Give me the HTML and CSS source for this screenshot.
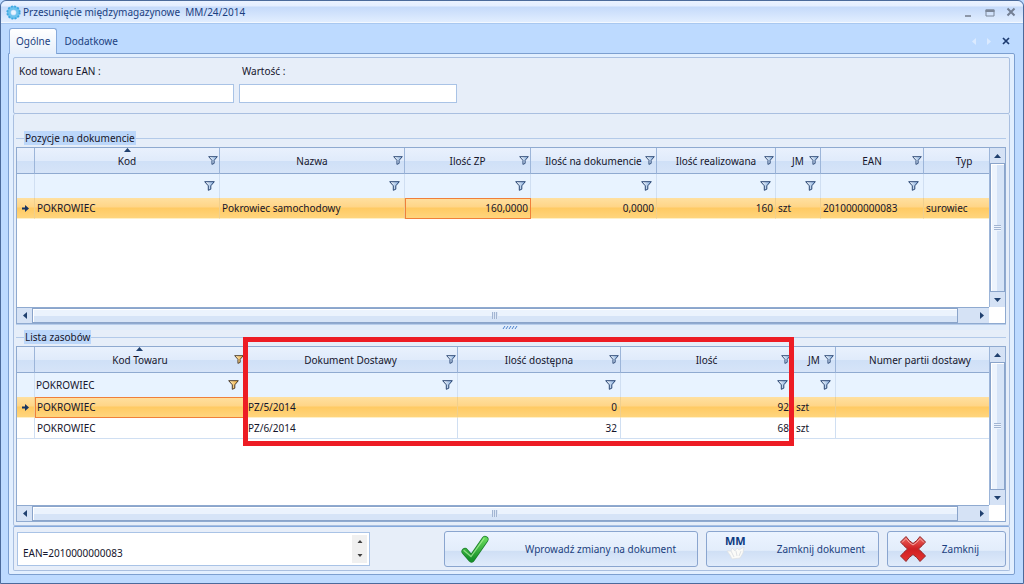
FILE: index.html
```html
<!DOCTYPE html>
<html lang="pl">
<head>
<meta charset="utf-8">
<title>Przesunięcie międzymagazynowe MM/24/2014</title>
<link rel="stylesheet" href="styles.css">
</head>
<body>
<svg class="defs" aria-hidden="true">
  <defs>
    <linearGradient id="gblue" x1="0" x2="1"><stop offset="0" stop-color="#fff"/><stop offset="1" stop-color="#7fa9dc"/></linearGradient>
    <linearGradient id="ggold" x1="0" x2="1"><stop offset="0" stop-color="#fff3cf"/><stop offset="1" stop-color="#f0a62c"/></linearGradient>
    <linearGradient id="ggreen" x1="0" y1="0" x2="0" y2="1"><stop offset="0" stop-color="#63d659"/><stop offset="1" stop-color="#16912a"/></linearGradient>
    <linearGradient id="gred" x1="0" y1="0" x2="0" y2="1"><stop offset="0" stop-color="#ee6a63"/><stop offset="0.5" stop-color="#cf1f22"/><stop offset="1" stop-color="#e5322f"/></linearGradient>
  </defs>
  <symbol id="funnel" viewBox="0 0 11 10"><path d="M.7.7h9.6L6.800 4.800v3.400L4.300 9.300V4.800z" fill="url(#gblue)" stroke="#2a4673"/></symbol>
  <symbol id="funnel-on" viewBox="0 0 11 10"><path d="M.7.7h9.6L6.800 4.800v3.400L4.300 9.300V4.800z" fill="url(#ggold)" stroke="#4a3a28"/></symbol>
  <symbol id="up" viewBox="0 0 7 4"><path d="M0 4 3.500 0 7 4z"/></symbol>
  <symbol id="down" viewBox="0 0 7 4"><path d="M0 0h7L3.500 4z"/></symbol>
  <symbol id="left" viewBox="0 0 4 7"><path d="M4 0v7L0 3.500z"/></symbol>
  <symbol id="right" viewBox="0 0 4 7"><path d="M0 0v7l4-3.500z"/></symbol>
  <symbol id="current" viewBox="0 0 7 7"><path d="M0 2.500h3V0l4 3.500L3 7V4.500H0z"/></symbol>
</svg>

<div class="window">
  <header class="titlebar">
    <svg class="app-icon" viewBox="0 0 16 16"><circle cx="8" cy="8" r="5" fill="none" stroke="#6cc3ee" stroke-width="4"/><circle cx="8" cy="8" r="6.6" fill="none" stroke="#3da6e0" stroke-width="2" stroke-dasharray="2 1.45"/><circle cx="8" cy="8" r="2.2" fill="#e6f5ff"/></svg>
    <h1 class="title">Przesunięcie międzymagazynowe&nbsp; MM/24/2014</h1>
    <div class="window-buttons">
      <button class="glyph" aria-label="Minimalizuj"><svg width="10" height="10"><path d="M1 8h6v2H1z" fill="#8d97a8"/></svg></button>
      <button class="glyph" aria-label="Maksymalizuj"><svg width="10" height="10"><path d="M1 3h8v6H1z" fill="none" stroke="#7b8698"/><path d="M.5 2.5h9V5h-9z" fill="#7b8698"/></svg></button>
      <button class="glyph" aria-label="Zamknij okno"><svg width="10" height="10"><path d="m1.500 1.500 7 7m0-7-7 7" stroke="#737f93" stroke-width="2"/></svg></button>
    </div>
  </header>

  <nav class="tabs" role="tablist">
    <button class="tab active" role="tab" aria-selected="true">Ogólne</button>
    <button class="tab" role="tab" aria-selected="false">Dodatkowe</button>
    <div class="tab-tools">
      <button class="glyph pale" aria-label="Poprzednia"><svg width="4" height="7"><use href="#left"/></svg></button>
      <button class="glyph pale" aria-label="Następna"><svg width="4" height="7"><use href="#right"/></svg></button>
      <button class="glyph" aria-label="Zamknij kartę"><svg width="8" height="8"><path d="m1 1 6 6m0-6L1 7" stroke="#1c3a70" stroke-width="1.7"/></svg></button>
    </div>
  </nav>

  <main class="content">
    <section class="panel fields">
      <div class="field"><label for="ean">Kod towaru EAN :</label><input id="ean" type="text"></div>
      <div class="field"><label for="value">Wartość :</label><input id="value" type="text"></div>
    </section>

    <section class="panel lists">
      <fieldset class="group first">
        <legend><span>Pozycje na dokumencie</span></legend>
        <div class="grid">
          <div class="view">
            <table class="items">
              <colgroup><col class="c-mark"><col class="c-kod"><col class="c-nazwa"><col class="c-zp"><col class="c-dok"><col class="c-real"><col class="c-jm"><col class="c-ean"><col></colgroup>
              <thead>
                <tr class="heads">
                  <th></th>
                  <th><div class="head"><svg class="sort" width="7" height="4"><use href="#up"/></svg><span>Kod</span><svg class="fun"><use href="#funnel"/></svg></div></th>
                  <th><div class="head"><span>Nazwa</span><svg class="fun"><use href="#funnel"/></svg></div></th>
                  <th><div class="head"><span>Ilość ZP</span><svg class="fun"><use href="#funnel"/></svg></div></th>
                  <th><div class="head"><span>Ilość na dokumencie</span><svg class="fun"><use href="#funnel"/></svg></div></th>
                  <th><div class="head"><span>Ilość realizowana</span><svg class="fun"><use href="#funnel"/></svg></div></th>
                  <th><div class="head"><span>JM</span><svg class="fun"><use href="#funnel"/></svg></div></th>
                  <th><div class="head"><span>EAN</span><svg class="fun"><use href="#funnel"/></svg></div></th>
                  <th><div class="head"><span>Typ</span><svg class="fun"></svg></div></th>
                </tr>
                <tr class="filters">
                  <td></td>
                  <td><svg class="fun big"><use href="#funnel"/></svg></td>
                  <td><svg class="fun big"><use href="#funnel"/></svg></td>
                  <td><svg class="fun big"><use href="#funnel"/></svg></td>
                  <td><svg class="fun big"><use href="#funnel"/></svg></td>
                  <td><svg class="fun big"><use href="#funnel"/></svg></td>
                  <td><svg class="fun big"><use href="#funnel"/></svg></td>
                  <td><svg class="fun big"><use href="#funnel"/></svg></td>
                  <td></td>
                </tr>
              </thead>
              <tbody>
                <tr class="selected"><td class="mark"><svg width="7" height="7"><use href="#current"/></svg></td><td>POKROWIEC</td><td>Pokrowiec samochodowy</td><td class="num focus">160,0000</td><td class="num">0,0000</td><td class="num">160</td><td>szt</td><td>2010000000083</td><td>surowiec</td></tr>
              </tbody>
            </table>
          </div>
          <div class="vbar">
            <button class="arrow" aria-label="W górę"><svg width="7" height="4"><use href="#up"/></svg></button>
            <div class="thumb"><i class="grip"></i></div>
            <button class="arrow" aria-label="W dół"><svg width="7" height="4"><use href="#down"/></svg></button>
          </div>
          <div class="hbar">
            <button class="arrow" aria-label="W lewo"><svg width="4" height="7"><use href="#left"/></svg></button>
            <div class="thumb"><i class="grip"></i></div>
            <button class="arrow" aria-label="W prawo"><svg width="4" height="7"><use href="#right"/></svg></button>
          </div>
          <div class="corner"></div>
        </div>
      </fieldset>

      <div class="splitter"><svg width="18" height="3"><path d="m1 3 2-3m1 3 2-3m1 3 2-3m1 3 2-3m1 3 2-3" stroke="#4a80cc"/></svg></div>

      <fieldset class="group second">
        <legend><span>Lista zasobów</span></legend>
        <div class="grid">
          <div class="view">
            <table class="stock">
              <colgroup><col class="c-mark"><col class="s-kod"><col class="s-dok"><col class="s-dost"><col class="s-ilosc"><col class="s-jm"><col></colgroup>
              <thead>
                <tr class="heads">
                  <th></th>
                  <th><div class="head"><svg class="sort" width="7" height="4"><use href="#up"/></svg><span>Kod Towaru</span><svg class="fun edge"><use href="#funnel-on"/></svg></div></th>
                  <th><div class="head"><span>Dokument Dostawy</span><svg class="fun"><use href="#funnel"/></svg></div></th>
                  <th><div class="head"><span>Ilość dostępna</span><svg class="fun"><use href="#funnel"/></svg></div></th>
                  <th><div class="head"><span>Ilość</span><svg class="fun"><use href="#funnel"/></svg></div></th>
                  <th><div class="head"><span>JM</span><svg class="fun"><use href="#funnel"/></svg></div></th>
                  <th><div class="head"><span>Numer partii dostawy</span><svg class="fun"></svg></div></th>
                </tr>
                <tr class="filters">
                  <td></td>
                  <td><div class="filled"><span>POKROWIEC</span><svg class="fun big"><use href="#funnel-on"/></svg></div></td>
                  <td><svg class="fun big"><use href="#funnel"/></svg></td>
                  <td><svg class="fun big"><use href="#funnel"/></svg></td>
                  <td><svg class="fun big"><use href="#funnel"/></svg></td>
                  <td><svg class="fun big"><use href="#funnel"/></svg></td>
                  <td></td>
                </tr>
              </thead>
              <tbody>
                <tr class="selected"><td class="mark"><svg width="7" height="7"><use href="#current"/></svg></td><td class="focus">POKROWIEC</td><td class="doc">PZ/5/2014</td><td class="num">0</td><td class="num">92</td><td class="unit">szt</td><td></td></tr>
                <tr><td class="mark"></td><td>POKROWIEC</td><td class="doc">PZ/6/2014</td><td class="num">32</td><td class="num">68</td><td class="unit">szt</td><td></td></tr>
              </tbody>
            </table>
          </div>
          <div class="vbar">
            <button class="arrow" aria-label="W górę"><svg width="7" height="4"><use href="#up"/></svg></button>
            <div class="thumb"><i class="grip"></i></div>
            <button class="arrow" aria-label="W dół"><svg width="7" height="4"><use href="#down"/></svg></button>
          </div>
          <div class="hbar">
            <button class="arrow" aria-label="W lewo"><svg width="4" height="7"><use href="#left"/></svg></button>
            <div class="thumb"><i class="grip"></i></div>
            <button class="arrow" aria-label="W prawo"><svg width="4" height="7"><use href="#right"/></svg></button>
          </div>
          <div class="corner"></div>
          <div class="highlight"></div>
        </div>
      </fieldset>
    </section>

    <footer class="panel actions">
      <div class="memo">
        <textarea aria-label="Informacje" rows="2" readonly>EAN=2010000000083</textarea>
        <div class="spin">
          <button class="glyph" aria-label="Przewiń w górę"><svg width="6" height="3" viewBox="0 0 7 4"><use href="#up"/></svg></button>
          <button class="glyph" aria-label="Przewiń w dół"><svg width="6" height="3" viewBox="0 0 7 4"><use href="#down"/></svg></button>
        </div>
      </div>
      <button class="action apply">
        <svg width="30" height="30" viewBox="0 0 30 30"><path d="M5 17.500 11.500 25 25 5.500" fill="none" stroke="#1a7d2a" stroke-width="7" stroke-linecap="round" stroke-linejoin="round"/><path d="M5 17.500 11.500 25 25 5.500" fill="none" stroke="url(#ggreen)" stroke-width="5.500" stroke-linecap="round" stroke-linejoin="round"/><path d="M4 16.500 11 22.500 24 4.500" fill="none" stroke="#b5f2a5" stroke-width="1.200" stroke-linecap="round" opacity=".7"/></svg>
        <span>Wprowadź zmiany na dokument</span>
      </button>
      <button class="action doc-close">
        <svg width="24" height="34" viewBox="0 0 24 34"><path d="m3 19 4 0 1-3 3 3 2-3 2 2 5-3-1 6-3 5-8 1-2-4z" fill="#fbfbf8" stroke="#dcdfe3" stroke-width=".7"/><path d="m7 19 3 6m2-6 1 5m4-5-2 5" stroke="#d2d6dc" stroke-width=".7"/><text x="1" y="13" class="mm">MM</text></svg>
        <span>Zamknij dokument</span>
      </button>
      <button class="action close">
        <svg width="28" height="28" viewBox="0 0 28 28"><path d="M1.500 7 7 1.500Q10 6 14 8.500 18 6 21 1.500L26.500 7Q23 11 19.500 14 23 17 26.500 21L21 26.500Q18 22 14 19.500 10 22 7 26.500L1.500 21Q5 17 8.500 14 5 11 1.500 7z" fill="url(#gred)" stroke="#93282a" stroke-linejoin="round"/><path d="M3 7.500 7 3.500Q10 8 14 10 18 8 21 3.500l4 4" fill="none" stroke="#f7aaa5"/></svg>
        <span>Zamknij</span>
      </button>
    </footer>
  </main>
</div>
</body>
</html>
```

FILE: styles.css
```css
* { box-sizing: border-box; }

body {
  margin: 0;
  background: #bddaff;
  color: #15152b;
  font: 10px/14px "Noto Sans", "Open Sans", sans-serif;
}

button, input, textarea { font: inherit; color: inherit; }
button { padding: 0; border: 0; background: none; }
svg { display: block; flex: none; }
.defs { position: absolute; width: 0; height: 0; }

.window {
  display: flex;
  flex-direction: column;
  min-height: 100vh;
  padding: 0 8px 8px 7px;
  border: 1px solid #4b6a9b;
  border-radius: 6px 6px 0 0;
  background: #bddaff;
}

.titlebar {
  display: flex;
  align-items: center;
  height: 23px;
  margin: 0 -8px 0 -7px;
  padding: 0 7px 0 5px;
  border-bottom: 1px solid #a9c8f0;
  border-radius: 6px 6px 0 0;
  background: linear-gradient(#eaf2ff 0, #e4eeff 5px, #c5dafa 6px, #e3efff 22px);
  box-shadow: inset 0 -1px #f3f8ff;
}
.app-icon { width: 15px; height: 15px; margin-right: 2px; }
.title { margin: 0; color: #1b3f80; font-size: 10px; font-weight: 400; }
.window-buttons { display: flex; gap: 11px; margin-left: auto; }
.glyph { display: flex; align-items: center; justify-content: center; }

.tabs { display: flex; align-items: flex-end; height: 29px; padding-left: 1px; }
.tab { height: 25px; padding: 0 6px 1px; border: 1px solid transparent; border-bottom: 0; color: #1b3f80; }
.tab.active {
  position: relative;
  height: 26px;
  margin-bottom: -1px;
  padding-bottom: 2px;
  border-color: #87aadb;
  border-radius: 3px 3px 0 0;
  background: linear-gradient(#fff, #e6effb);
}
.tab-tools { display: flex; align-items: center; gap: 11px; height: 24px; margin-left: auto; padding-right: 5px; }
.pale { fill: #dbeaff; }

.content {
  display: flex;
  flex: 1;
  flex-direction: column;
  padding: 3px 4px;
  border: 1px solid #7c9fd0;
  border-radius: 0 2px 2px 2px;
  background: #e2efff;
}
.panel { border: 1px solid #a9bfe0; border-radius: 2px; background: #e7eef9; }

.fields { display: flex; gap: 5px; height: 57px; padding: 6px 2px; }
.field { display: flex; flex-direction: column; justify-content: space-between; width: 218px; padding-bottom: 4px; }
.field label { padding-left: 3px; }
.field input { width: 100%; height: 19px; padding: 0 3px; border: 1px solid #a9c3e6; background: #fff; }

.lists { display: flex; flex: 1; flex-direction: column; padding: 17px 3px 3px 2px; border-top: 0; background: #e6eef9; }
.group { display: flex; flex-direction: column; min-width: 0; margin: 0; padding: 0; border: 0; }
.group.first { flex: 193 1 0; }
.group.second { flex: 192 1 0; }
legend { display: flex; align-items: center; width: 100%; padding: 0; }
legend::before { content: ""; width: 8px; height: 1px; background: #b3cae9; }
legend::after { content: ""; flex: 1; height: 1px; background: #b3cae9; }
legend span { padding: 0 1px; background: #bcd7fa; }

.grid {
  position: relative;
  display: grid;
  flex: 1;
  grid-template: minmax(0, 1fr) 16px / minmax(0, 1fr) 16px;
  margin-top: 2px;
  border: 1px solid #8faad0;
}
.view { overflow: hidden; background: #fff; }
table { width: calc(100% + 16px); border-collapse: separate; border-spacing: 0; table-layout: fixed; }
.c-mark { width: 18px; }
.c-kod, .c-nazwa { width: 185px; }
.c-zp { width: 126px; }
.c-dok { width: 126px; }
.c-real { width: 119px; }
.c-jm { width: 45px; }
.c-ean { width: 103px; }
.s-kod { width: 209px; }
.s-dok { width: 214px; }
.s-dost { width: 163px; }
.s-ilosc { width: 172px; }
.s-jm { width: 43px; }

th, td { padding: 0 2px; border-right: 1px solid #d0dff2; text-align: left; font-weight: 400; white-space: nowrap; }
th { height: 26px; padding: 0; border-right-color: #9cb5d9; border-bottom: 1px solid #8faad0; background: linear-gradient(#e9f1fd, #e0ebfb 50%, #cfe0f7 51%, #d6e4f8); }
.head { position: relative; display: flex; align-items: center; height: 25px; padding: 0 1px 0 11px; }
.head span { flex: 1; text-align: center; }
.sort { position: absolute; top: 0; left: calc(50% - 3px); fill: #20406f; }
.fun { width: 10px; height: 9px; }
.edge { margin-right: -2px; }
.big { width: 11px; height: 10px; margin: 0 2px 0 auto; }
.filters td { height: 24px; background: #e8f3ff; }
.filled { display: flex; align-items: center; }
.filters td .filled { margin-left: -1px; }
tbody td { height: 21px; border-bottom: 1px solid #d0dff2; }
.selected td { border-right-color: #f0cf8d; border-bottom-color: #fff0c8; background: linear-gradient(#ffe0a0, #ffd587 45%, #ffca63 50%, #ffd57d); }
.mark { padding: 0 5px; fill: #173463; }
.doc, .unit { padding-left: 3px; }
.stock .doc { padding-left: 4px; }
.num { padding-right: 2px; text-align: right; }
.stock .num { padding-right: 3px; }
.focus { outline: 1px solid #f07f3a; outline-offset: -1px; }

.vbar, .hbar { display: flex; background: #d5e2f5; }
.vbar { flex-direction: column; border-left: 1px solid #9cb5d9; }
.hbar { border-top: 1px solid #8faad0; }
.arrow { display: flex; align-items: center; justify-content: center; width: 15px; height: 15px; fill: #20406f; }
.thumb { display: flex; flex: 1; align-items: center; justify-content: center; border: 1px solid #8aa4ca; }
.vbar .thumb { background: linear-gradient(90deg, #edf4fd 45%, #d6e4f7 50%); box-shadow: inset 1px 1px #fff; }
.hbar .thumb { margin-right: 16px; background: linear-gradient(#ebf3fd 50%, #d6e4f7 55%); box-shadow: inset 1px 1px #fff; }
.grip { width: 7px; height: 6px; background: repeating-linear-gradient(#a2b5d2 0 1px, #edf4fd 1px 2px); }
.hbar .grip { width: 6px; height: 7px; background: repeating-linear-gradient(90deg, #a2b5d2 0 1px, #dce7f6 1px 2px); }
.corner { background: #fff; }

.splitter { display: flex; align-items: center; justify-content: center; height: 6px; border-top: 1px solid #b7cdeb; background: #e2edfb; }

.highlight {
  position: absolute;
  top: -10px;
  left: 226px;
  width: 551px;
  height: 109px;
  border: 5px solid #ed1c24;
}

.actions { display: flex; align-items: center; gap: 8px; height: 45px; padding: 0 3px; border-top-color: #84a9dd; background: #e7eef9; }
.memo { display: flex; width: 353px; height: 34px; margin-right: auto; padding: 2px; border: 1px solid #a9c3e6; background: #fff; }
.memo textarea { flex: 1; min-width: 0; padding: 11px 3px 0; overflow: hidden; border: 0; background: #fff; resize: none; }
.spin { display: flex; flex-direction: column; width: 15px; background: #f0f0f0; fill: #404040; }
.spin .glyph { flex: 1; }
.action {
  display: flex;
  align-items: center;
  height: 36px;
  border: 1px solid #8aa5cf;
  border-radius: 3px;
  background: linear-gradient(#ebf3ff, #e3edfb 54%, #cfdff5 56%, #e0ebfb);
  color: #1b3f80;
}
.action span { flex: 1; text-align: center; }
.apply { width: 254px; padding-left: 15px; }
.apply span { padding-left: 14px; }
.doc-close { width: 173px; padding-left: 17px; }
.doc-close span { padding-left: 16px; }
.close { width: 119px; padding: 0 11px; }
.mm { fill: #0c3a80; font: 700 11px "Noto Sans", sans-serif; }
```
